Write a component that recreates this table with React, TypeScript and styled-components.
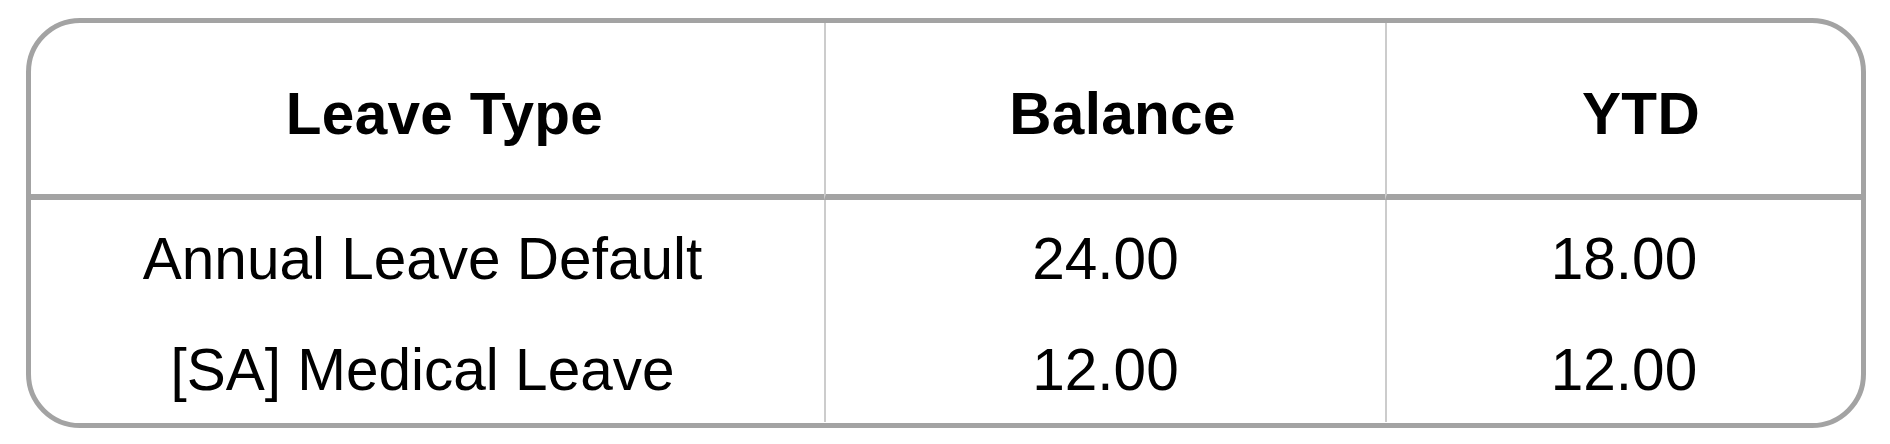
import styled, { createGlobalStyle } from "styled-components";

const GlobalStyle = createGlobalStyle`
    * {
        box-sizing: border-box;
    }
    body {
        margin: 0;
        background-color: #ffffff;
        font-family: 'Liberation Sans', Arial, sans-serif;
    }
`

const Colors = {
    frame: '#a3a3a3',
    rule: '#cccccc',
    text: '#000000',
}

const Page = styled.div`
    padding: 18px 24px 16px 26px;
`

const Card = styled.div`
    width: 1840px;
    height: 410px;
    border: 5px solid ${Colors.frame};
    border-radius: 54px;
    overflow: hidden;
    display: grid;
    grid-template-columns: 793px 561px 476px;
    grid-template-rows: 177px 111px 111px;
`

const HeadCell = styled.div<{ $first?: boolean }>`
    display: flex;
    align-items: center;
    justify-content: center;
    padding-left: 34px;
    padding-top: 9px;
    border-bottom: 6px solid ${Colors.frame};
    border-left: ${p => p.$first ? 'none' : `2px solid ${Colors.rule}`};
    color: ${Colors.text};
    font-weight: 700;
    font-size: 58.5px;
    letter-spacing: 0.3px;
`

const BodyCell = styled.div<{ $first?: boolean }>`
    display: flex;
    align-items: center;
    justify-content: center;
    padding-top: 5px;
    padding-right: ${p => p.$first ? '10px' : '0'};
    border-left: ${p => p.$first ? 'none' : `2px solid ${Colors.rule}`};
    color: ${Colors.text};
    font-weight: 400;
    font-size: 58.5px;
    white-space: nowrap;
`

const leaves = [
    { type: 'Annual Leave Default', balance: '24.00', ytd: '18.00' },
    { type: '[SA] Medical Leave', balance: '12.00', ytd: '12.00' },
]

const App = () => {
    return (
        <Page>
            <GlobalStyle />
            <Card>
                <HeadCell $first>Leave Type</HeadCell>
                <HeadCell>Balance</HeadCell>
                <HeadCell>YTD</HeadCell>
                {leaves.map(leave => (
                    <>
                        <BodyCell $first key={leave.type}>{leave.type}</BodyCell>
                        <BodyCell>{leave.balance}</BodyCell>
                        <BodyCell>{leave.ytd}</BodyCell>
                    </>
                ))}
            </Card>
        </Page>
    );
}

export default App;
